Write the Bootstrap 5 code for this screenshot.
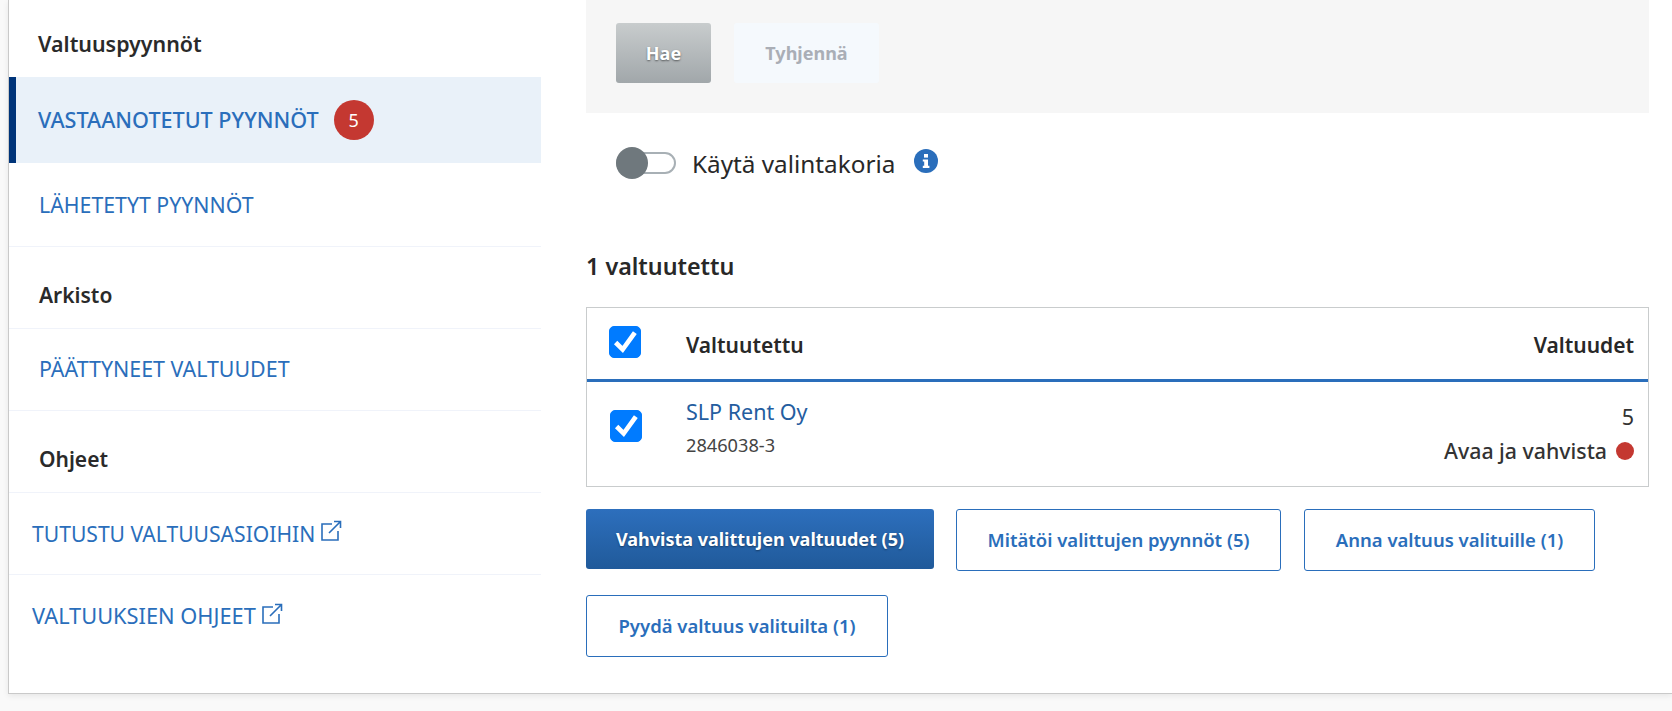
<!DOCTYPE html>
<html lang="fi">
<head>
<meta charset="utf-8">
<title>Valtuuspyynnöt</title>
<link href="https://cdn.jsdelivr.net/npm/bootstrap@5.3.0/dist/css/bootstrap.min.css" rel="stylesheet">
<style>
html,body{height:711px;overflow:hidden}
body{background:#f9f9f9;font-family:"Noto Sans","Liberation Sans",sans-serif;color:#282828;padding-left:8px}
.shell{height:694px;background:#fff;border-left:1px solid #c9c9c9;border-bottom:1px solid #c9c9c9;box-shadow:0 2px 6px rgba(0,0,0,.08)}
.side{width:532px;flex:none}
.side-row{height:82px;padding:0 0 0 30px;border:0;border-bottom:1px solid #f0f3fa;border-radius:0;font-size:21.4px;color:#2a6ebb;display:flex;align-items:center;background:#fff}
.side-row.tall{height:84px;font-size:21.3px}
.side-row.ext{padding-left:23px}
.side-row.ext-a{font-size:21.1px}
.side-row.ext-b{font-size:21.8px}
.side-row.head{font-weight:600;color:#2a2a2a;font-size:21px;padding-top:17px}
.side-row.first{height:77px;border-bottom:0;padding:12px 0 0 29px;font-size:21.4px}
.side-row.on{height:86px;background:#e9f1f9;border-left:7px solid #003479;border-bottom:0;padding-left:22px;font-weight:500;color:#2a6ebb;font-size:21.6px}
.side-row svg{margin-left:5px;margin-top:-5px}
.count{width:40px;height:40px;background:#c43831;color:#fff;font-size:18px;margin-left:15px;font-weight:400}
.pane{padding-left:45px;width:1108px;flex:none}
.filter{height:113px;background:#f6f6f6;padding:23px 0 0 30px;gap:23px}
.btn.hae,.btn.tyh{height:60px;font-weight:700;font-size:18px;padding:0;border:0;border-radius:3px;display:flex;align-items:center;justify-content:center}
.btn.hae{width:95px;color:#fff;background:linear-gradient(#c8cccd,#a1a7aa);text-shadow:0 1px 2px rgba(0,0,0,.5)}
.btn.tyh{width:145px;color:#aaaeb6;background:#f5f9fd}
.usebasket{padding:34px 0 0 30px;height:130px}
.basket-line{height:32px}
.track{width:60px;height:22px;border:2px solid #a8b0b5;border-radius:11px;position:relative;flex:none;background:#fff}
.knob{position:absolute;left:-2px;top:-7px;width:32px;height:32px;border-radius:50%;background:#6f787d}
.uselabel{font-size:24.3px;margin-left:16px;color:#282828;padding-top:2px}
.usebasket svg{margin-left:19px;margin-top:-5px}
.count-title{font-size:23.3px;font-weight:600;margin:0;height:64px;line-height:46px}
.tbl{border:1px solid #c9cccd;width:1063px;height:180px}
.tbl-head{height:74px;border-bottom:3px solid #2a6ebb}
.cell-check{width:99px;padding-left:22px;flex:none}
.tbl-head .cell-check{padding-bottom:4px}
.form-check-input.tick{width:32px;height:32px;margin:0;border-radius:5px;background-color:#007bff;border-color:#007bff;opacity:1;display:block;background-size:100% 100%;background-image:url("data:image/svg+xml,%3csvg xmlns='http://www.w3.org/2000/svg' viewBox='0 0 32 32'%3e%3cpath fill='none' stroke='%23fff' stroke-width='5' d='M6 16.5l7.5 7.5L26.5 6'/%3e%3c/svg%3e")}
.tbl-head .tbl-name,.tbl-head .tbl-right{font-weight:600;font-size:21px;padding-top:4px}
.tbl-right{margin-left:auto;padding-right:14px;text-align:right}
.row-check{padding-left:23px;padding-top:28px}
.row-main{padding-top:16px}
.org{font-size:21.5px;color:#245d9f;line-height:28px;text-decoration:none;display:block}
.ytunnus{font-size:18.2px;color:#444;line-height:24px;margin-top:7px}
.row-right{padding-top:21px}
.num{font-size:21.5px;color:#333;line-height:28px}
.status{font-size:21.3px;font-weight:500;color:#333;line-height:28px;margin-top:6px}
.dot{width:18px;height:18px;background:#c43831;border-radius:50%;margin-left:9px;flex:none}
.actions{gap:24px 22px;margin-top:22px;width:1063px}
.btn.act{height:62px;font-size:18.5px;font-weight:600;border:1px solid #2a6ebb;color:#2a6ebb;background:#fff;border-radius:3px;padding:0;display:flex;align-items:center;justify-content:center}
.btn.act.main{height:60px;color:#fff;border:0;background:linear-gradient(#2d6fbd,#205a9a);text-shadow:0 1px 2px rgba(0,0,0,.4);font-weight:700;font-size:18px;width:348px}
.w-mit{width:325px;margin-right:1px}.w-anna{width:291px}.w-pyy{width:302px}
</style>
</head>
<body>
<div class="shell d-flex">
  <nav class="side">
    <div class="list-group list-group-flush">
      <div class="list-group-item side-row head first">Valtuuspyynnöt</div>
      <a href="#" class="list-group-item side-row on">VASTAANOTETUT PYYNNÖT<span class="count rounded-circle d-flex align-items-center justify-content-center">5</span></a>
      <a href="#" class="list-group-item side-row tall">LÄHETETYT PYYNNÖT</a>
      <div class="list-group-item side-row head">Arkisto</div>
      <a href="#" class="list-group-item side-row">PÄÄTTYNEET VALTUUDET</a>
      <div class="list-group-item side-row head">Ohjeet</div>
      <a href="#" class="list-group-item side-row ext ext-a">TUTUSTU VALTUUSASIOIHIN<svg width="22" height="22" viewBox="0 0 22 22" fill="none" stroke="#2a6ebb" stroke-width="1.6"><path d="M12 4H2v16h16V11"/><path d="M9 13 20 2M14 1.5h6.5V8"/></svg></a>
      <a href="#" class="list-group-item side-row ext ext-b">VALTUUKSIEN OHJEET<svg width="22" height="22" viewBox="0 0 22 22" fill="none" stroke="#2a6ebb" stroke-width="1.6"><path d="M12 4H2v16h16V11"/><path d="M9 13 20 2M14 1.5h6.5V8"/></svg></a>
    </div>
  </nav>
  <main class="pane">
    <div class="filter d-flex">
      <button type="button" class="btn hae">Hae</button>
      <button type="button" class="btn tyh">Tyhjennä</button>
    </div>
    <div class="usebasket d-flex align-items-start">
      <div class="basket-line d-flex align-items-center">
        <span class="track"><span class="knob"></span></span>
        <span class="uselabel">Käytä valintakoria</span>
        <svg width="24" height="24" viewBox="0 0 24 24"><circle cx="12" cy="12" r="12" fill="#2a6ebb"/><rect x="10" y="5" width="4" height="3.6" fill="#fff"/><path d="M8.8 10.4H14v6.4h1.4v2.2H8.8v-2.2h1.4v-4.2H8.8z" fill="#fff"/></svg>
      </div>
    </div>
    <h2 class="count-title">1 valtuutettu</h2>
    <div class="tbl">
      <div class="tbl-head d-flex align-items-center">
        <div class="cell-check"><input class="form-check-input tick" type="checkbox" checked aria-label="Valitse kaikki"></div>
        <div class="tbl-name">Valtuutettu</div>
        <div class="tbl-right">Valtuudet</div>
      </div>
      <div class="d-flex">
        <div class="cell-check row-check"><input class="form-check-input tick" type="checkbox" checked aria-label="Valitse SLP Rent Oy"></div>
        <div class="row-main">
          <a href="#" class="org">SLP Rent Oy</a>
          <div class="ytunnus">2846038-3</div>
        </div>
        <div class="tbl-right row-right">
          <div class="num">5</div>
          <div class="status d-flex align-items-center justify-content-end">Avaa ja vahvista<span class="dot"></span></div>
        </div>
      </div>
    </div>
    <div class="actions d-flex flex-wrap align-items-start">
      <button type="button" class="btn act main">Vahvista valittujen valtuudet (5)</button>
      <button type="button" class="btn act w-mit">Mitätöi valittujen pyynnöt (5)</button>
      <button type="button" class="btn act w-anna">Anna valtuus valituille (1)</button>
      <button type="button" class="btn act w-pyy">Pyydä valtuus valituilta (1)</button>
    </div>
  </main>
</div>
<script src="https://cdn.jsdelivr.net/npm/bootstrap@5.3.0/dist/js/bootstrap.bundle.min.js"></script>
</body>
</html>
